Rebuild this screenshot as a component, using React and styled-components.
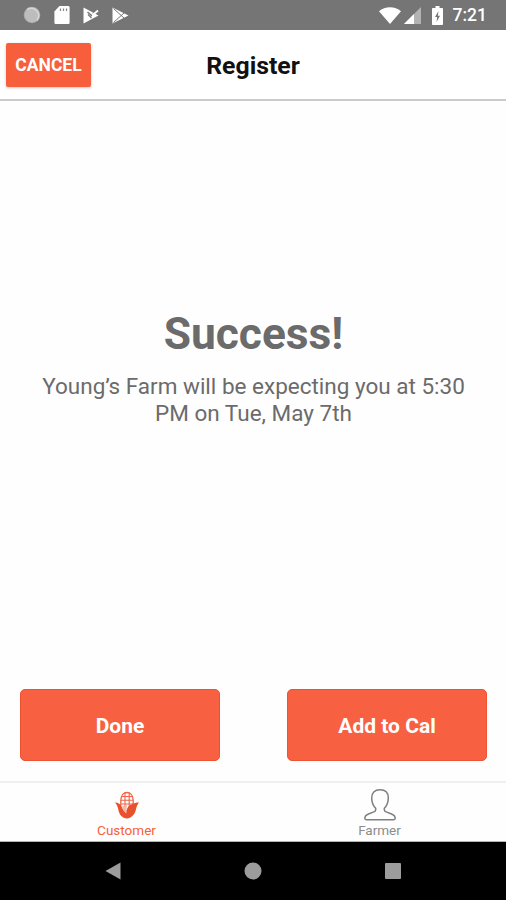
import React from "react";
import styled, { createGlobalStyle } from "styled-components";

const tabs = [
  { label: "Customer", icon: "corn", active: true },
  { label: "Farmer", icon: "person", active: false },
];

const CornIcon = () => (
  <svg width="26" height="28" viewBox="0 0 26 28" fill="none">
    <path
      d="M6.800 15V9.500C6.800 4.500 9.500 1.500 13 1.500s6.200 3 6.200 8V15"
      stroke="#f0654a"
      strokeWidth="1.300"
    />
    <path
      d="M11 2v14M15.200 2v14M8 5.500h10M7 9.300h12M7 13h12"
      stroke="#f0654a"
      strokeWidth="1.100"
    />
    <path
      d="M1 11.500c3.500 0 5.500 1.500 6.800 4.500 1 2.600 2.600 4.500 4.400 6.500 0-4.500 1.800-8 6-9.500 1.800-.9 4-1.500 6.800-1.500-2.200 2.500-2.600 5.500-3.500 8.500-1.200 4-4.500 7-8.500 7.500-4.500-.5-7.500-3.500-8.500-8-.6-3-1.300-6-3.500-8z"
      fill="#e9502c"
    />
    <path d="M8 15.500l5-2-1 8.500c-2-1.700-3.300-3.800-4-6.500z" fill="#fbb5a3" />
  </svg>
);

const PersonIcon = () => (
  <svg width="34" height="34" viewBox="0 0 34 34" fill="none">
    <path
      d="M17 1.800c-5.600 0-8.300 3.200-8.300 8 0 4.200 1.300 8 4 10.500v1.500c0 1-.6 1.700-1.800 2.100L5.500 26c-2.700 1-3.700 2.300-3.700 4.300 0 .9.500 1.400 1.500 1.400h27.400c1 0 1.500-.5 1.500-1.400 0-2-1-3.300-3.700-4.300l-5.400-2.100c-1.200-.4-1.800-1.100-1.800-2.100v-1.500c2.700-2.500 4-6.300 4-10.500 0-4.800-2.700-8-8.300-8z"
      stroke="#7f7f7f"
      strokeWidth="1.500"
      strokeLinejoin="round"
    />
  </svg>
);

const App = () => {
  return (
    <Screen>
      <GlobalStyle />
      <StatusBar>
        <Notifications>
          <svg width="18" height="18" viewBox="0 0 18 18">
            <circle cx="9" cy="9" r="8.300" fill="#a9a9a9" />
            <circle cx="9" cy="9" r="7.300" fill="#bdbdbd" />
            <path
              d="M4 3.500a7.500 7.500 0 0 1 10 11"
              stroke="#d6d6d6"
              strokeWidth="1.500"
              fill="none"
            />
          </svg>
          <svg width="16" height="18" viewBox="0 0 16 18">
            <path
              d="M5.500 0H14c1 0 1.600.6 1.600 1.600v14.800c0 1-.6 1.600-1.600 1.600H2c-1 0-1.600-.6-1.600-1.600V5.500z"
              fill="#fff"
            />
            <path
              d="M6.500 2.500v2.500M9.500 2.500v2.500M12.500 2.500v2.500"
              stroke="#858585"
              strokeWidth="1.200"
            />
          </svg>
          <svg width="16" height="17" viewBox="0 0 16 17">
            <path d="M.5.500L15.500 8.500.5 16.500z" fill="#fff" />
            <path
              d="M4.500 5l4 3.500L15 2.500"
              stroke="#757575"
              strokeWidth="1.500"
              fill="none"
            />
            <path
              d="M5 7.500L8.500 11"
              stroke="#757575"
              strokeWidth="1.200"
              fill="none"
            />
            <path
              d="M9 8.500L15 3.500"
              stroke="#fff"
              strokeWidth="1.800"
              fill="none"
            />
          </svg>
          <svg width="17" height="17" viewBox="0 0 17 17">
            <path d="M.5.500L16.500 8.500.5 16.500z" fill="#fff" />
            <path
              d="M1.500 1.500L12 11M1.500 15.500L12 6"
              stroke="#757575"
              strokeWidth="1"
            />
          </svg>
        </Notifications>
        <SystemInfo>
          <svg width="22" height="17" viewBox="0 0 22 17">
            <path d="M0 4.200C6-1 16-1 22 4.200L11 17z" fill="#fff" />
          </svg>
          <svg width="17" height="17" viewBox="0 0 17 17">
            <path d="M17 0v17H0z" fill="#b3b3b3" />
            <path d="M10 7v10H0z" fill="#fff" />
          </svg>
          <svg width="11" height="19" viewBox="0 0 11 19">
            <path
              d="M3.500 0h4v2H10c.6 0 1 .4 1 1v15c0 .6-.4 1-1 1H1c-.6 0-1-.4-1-1V3c0-.6.4-1 1-1h2.500z"
              fill="#fff"
            />
            <path d="M6.500 5L3 11h2.200l-.7 5L8 9.700H5.800z" fill="#757575" />
          </svg>
          <Clock>7:21</Clock>
        </SystemInfo>
      </StatusBar>
      <Header>
        <CancelButton>CANCEL</CancelButton>
        <Title>Register</Title>
      </Header>
      <Content>
        <Heading>Success!</Heading>
        <Message>
          Young’s Farm will be expecting you at 5:30 PM on Tue, May 7th
        </Message>
      </Content>
      <Actions>
        <ActionButton>Done</ActionButton>
        <ActionButton>Add to Cal</ActionButton>
      </Actions>
      <TabBar>
        {tabs.map((tab) => (
          <Tab key={tab.label} $active={tab.active}>
            <TabIcon>
              {tab.icon === "corn" ? <CornIcon /> : <PersonIcon />}
            </TabIcon>
            {tab.label}
          </Tab>
        ))}
      </TabBar>
      <SystemNav>
        <svg width="16" height="18" viewBox="0 0 16 18">
          <path d="M15.500.500v17L.5 9z" fill="#9c9c9c" />
        </svg>
        <svg width="18" height="18" viewBox="0 0 18 18">
          <circle cx="9" cy="9" r="8.500" fill="#9c9c9c" />
        </svg>
        <svg width="16" height="16" viewBox="0 0 16 16">
          <rect width="16" height="16" rx="1" fill="#9c9c9c" />
        </svg>
      </SystemNav>
    </Screen>
  );
};

const GlobalStyle = createGlobalStyle`
  * {
    box-sizing: border-box;
  }
  body {
    margin: 0;
    font-family: Roboto, "Liberation Sans", sans-serif;
  }
  h1, h2, p {
    margin: 0;
  }
  button {
    border: 0;
    padding: 0;
    font-family: inherit;
  }
  svg {
    display: block;
    flex-shrink: 0;
  }
`;

const Screen = styled.div`
  width: 506px;
  height: 900px;
  display: flex;
  flex-direction: column;
  overflow: hidden;
  background-color: #fefefe;
`;

const StatusBar = styled.div`
  height: 30px;
  padding: 0 19px 0 23px;
  display: flex;
  align-items: center;
  justify-content: space-between;
  background-color: #757575;
`;

const Notifications = styled.div`
  display: flex;
  align-items: center;
  gap: 13px;
`;

const SystemInfo = styled.div`
  display: flex;
  align-items: center;
  gap: 3px;
  svg:nth-child(3) {
    margin: 0 7px 0 8px;
  }
`;

const Clock = styled.span`
  padding-top: 1px;
  font-size: 17.5px;
  font-weight: 500;
  line-height: 29px;
  color: #fff;
`;

const Header = styled.header`
  height: 71px;
  padding: 0 6px 3px;
  display: grid;
  grid-template-columns: 85px 1fr 85px;
  align-items: center;
  border-bottom: 2px solid #cbcbcb;
  background-color: #fff;
`;

const CancelButton = styled.button`
  height: 44px;
  margin-top: 3px;
  padding-top: 1px;
  border-radius: 2px;
  background-color: #f65e3c;
  color: #fff;
  font-size: 17.5px;
  font-weight: 700;
  box-shadow: 0 1px 3px rgba(0, 0, 0, 0.22);
`;

const Title = styled.h1`
  margin-top: 5px;
  font-size: 24.8px;
  font-weight: 700;
  line-height: 30px;
  text-align: center;
  color: #111;
`;

const Content = styled.main`
  flex: 1;
  padding: 0 34px 56px 35px;
  display: flex;
  flex-direction: column;
  justify-content: center;
  text-align: center;
  color: #6b6b6b;
`;

const Heading = styled.h2`
  font-size: 44.3px;
  font-weight: 700;
  line-height: 54px;
`;

const Message = styled.p`
  margin-top: 12px;
  font-size: 22.5px;
  line-height: 27px;
`;

const Actions = styled.div`
  padding: 0 19px 20px 20px;
  display: flex;
  justify-content: space-between;
`;

const ActionButton = styled.button`
  width: 200px;
  height: 72px;
  padding-top: 2px;
  border: 1px solid #ef5230;
  border-radius: 5px;
  background-color: #f76040;
  color: #fff;
  font-size: 21px;
  font-weight: 700;
`;

const TabBar = styled.nav`
  height: 61px;
  display: flex;
  border-top: 2px solid #f0f0f0;
  border-bottom: 1px solid #b5b5b5;
  background-color: #fefefe;
`;

const Tab = styled.div`
  flex: 1;
  padding-top: 5px;
  display: flex;
  flex-direction: column;
  align-items: center;
  font-size: 13.5px;
  line-height: 17px;
  color: ${({ $active }) => ($active ? "#f65e3c" : "#8c8c8c")};
`;

const TabIcon = styled.div`
  height: 34px;
  display: flex;
  align-items: center;
`;

const SystemNav = styled.div`
  height: 58px;
  padding: 0 105px;
  display: flex;
  align-items: center;
  justify-content: space-between;
  background-color: #000;
`;

export default App;
